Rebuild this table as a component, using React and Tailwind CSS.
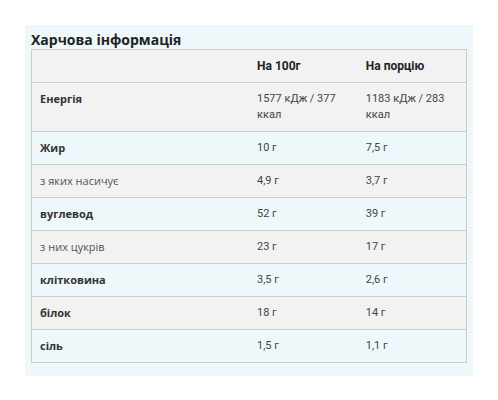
import React from 'react';

const rows = [
  { name: 'Енергія', per100: '1577 кДж / 377 ккал', portion: '1183 кДж / 283 ккал', bold: true },
  { name: 'Жир', per100: '10 г', portion: '7,5 г', bold: true },
  { name: 'з яких насичує', per100: '4,9 г', portion: '3,7 г' },
  { name: 'вуглевод', per100: '52 г', portion: '39 г', bold: true },
  { name: 'з них цукрів', per100: '23 г', portion: '17 г' },
  { name: 'клітковина', per100: '3,5 г', portion: '2,6 г', bold: true },
  { name: 'білок', per100: '18 г', portion: '14 г', bold: true },
  { name: 'сіль', per100: '1,5 г', portion: '1,1 г', bold: true },
];

export default function App() {
  return (
    <div className="w-[498px] h-[400px] bg-white pt-[25px] pl-[25px]">
      <div className="w-[448px] bg-[#eef7f9] pt-[5px] pb-[13px] px-[6px]">
        <h3 className="font-['Open_Sans',sans-serif] text-[14px] leading-[19px] font-bold text-[#222]">
          Харчова інформація
        </h3>
        <table className="w-[436px] table-fixed border-collapse border border-[#cccccc] text-[11px] leading-[16px]">
          <thead>
            <tr className="bg-[#f2f2f2] border-b border-[#cccccc]">
              <th className="w-1/2 px-2 py-2"></th>
              <th className="w-1/4 px-2 py-2 text-left font-['Roboto',sans-serif] text-[12px] font-bold text-[#222]">На 100г</th>
              <th className="w-1/4 px-2 py-2 text-left font-['Roboto',sans-serif] text-[12px] font-bold text-[#222]">На порцію</th>
            </tr>
          </thead>
          <tbody>
            {rows.map((r, i) => (
              <tr key={r.name} className={`border-b border-[#cccccc] ${i % 2 === 0 ? 'bg-[#f2f2f2]' : ''}`}>
                <td
                  className={`px-2 py-2 align-top font-['Open_Sans',sans-serif] ${
                    r.bold ? 'font-bold text-[#333]' : 'font-normal text-[#555]'
                  }`}
                >
                  {r.name}
                </td>
                <td className="px-2 py-2 align-top font-['Roboto',sans-serif] font-normal text-[#444]">{r.per100}</td>
                <td className="px-2 py-2 align-top font-['Roboto',sans-serif] font-normal text-[#444]">{r.portion}</td>
              </tr>
            ))}
          </tbody>
        </table>
      </div>
    </div>
  );
}
